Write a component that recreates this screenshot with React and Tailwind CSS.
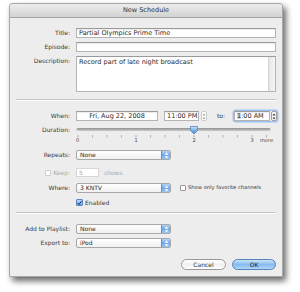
import React from "react";

const font = { fontFamily: '"DejaVu Sans", "Liberation Sans", sans-serif' };

function Label({ children, className = "" }) {
  return (
    <div className={"w-[60px] shrink-0 text-right text-[6px] text-[#3a3a3a] leading-none " + className}>
      {children}
    </div>
  );
}

function Field({ children, className = "" }) {
  return (
    <div
      className={
        "h-[10px] bg-white border border-[#b4b4b4] border-t-[#9a9a9a] shadow-[inset_0_1px_1px_rgba(0,0,0,0.08)] flex items-center px-[2px] text-[6.5px] text-[#2a2a2a] leading-none whitespace-nowrap overflow-hidden " +
        className
      }
    >
      {children}
    </div>
  );
}

function Popup({ value }) {
  return (
    <div className="ml-[6px] w-[95px] h-[10px] rounded-[2px] border border-[#a8a8a8] bg-gradient-to-b from-white to-[#f0f0f0] flex items-stretch overflow-hidden">
      <div className="flex-1 flex items-center pl-[3px] text-[6px] text-[#2a2a2a] leading-none">{value}</div>
      <div className="w-[9px] bg-gradient-to-b from-[#b3d5f7] via-[#6aa7e8] to-[#95c5f2] border-l border-[#6690c8] flex items-center justify-center">
        <svg width="5" height="7" viewBox="0 0 5 7">
          <path d="M2.5 0.5 L4.5 2.7 L0.5 2.7 Z" fill="#fff" />
          <path d="M2.5 6.5 L4.5 4.3 L0.5 4.3 Z" fill="#fff" />
        </svg>
      </div>
    </div>
  );
}

function Stepper({ blue = false }) {
  return (
    <div
      className={
        "w-[6px] h-[10px] rounded-[2px] border flex flex-col items-center justify-center " +
        (blue ? "border-[#a0a0a0] bg-white" : "border-[#cacaca] bg-white")
      }
    >
      <svg width="4" height="7" viewBox="0 0 4 7">
        <path d="M2 0.5 L3.6 2.6 L0.4 2.6 Z" fill={blue ? "#333" : "#a0a0a0"} />
        <path d="M2 6.5 L3.6 4.4 L0.4 4.4 Z" fill={blue ? "#333" : "#a0a0a0"} />
      </svg>
    </div>
  );
}

function Slider() {
  const ticks = [];
  for (let k = 0; k <= 13; k++) ticks.push(2 + k * 14.5);
  return (
    <div className="relative ml-[6px] w-[196px] h-[20px]">
      <svg width="196" height="20" className="absolute left-0 top-0">
        <defs>
          <linearGradient id="trk" x1="0" y1="0" x2="0" y2="1">
            <stop offset="0" stopColor="#8f8f8f" />
            <stop offset="1" stopColor="#cdcdcd" />
          </linearGradient>
          <linearGradient id="thm" x1="0" y1="0" x2="0" y2="1">
            <stop offset="0" stopColor="#d3e8fc" />
            <stop offset="0.5" stopColor="#76afec" />
            <stop offset="1" stopColor="#4a8ddb" />
          </linearGradient>
        </defs>
        <rect x="0.5" y="2" width="194" height="3" rx="1.5" fill="url(#trk)" />
        {ticks.map((t, i) => (
          <line key={i} x1={t} x2={t} y1="9" y2="11.5" stroke="#999" strokeWidth="0.7" />
        ))}
        <path d="M114.5 0.5 H121.5 V4.5 L118 8 L114.5 4.5 Z" fill="url(#thm)" stroke="#4a78b2" strokeWidth="0.7" />
      </svg>
      <span className="absolute top-[12px] left-[0px] text-[5px] text-[#444] leading-none">0</span>
      <span className="absolute top-[12px] left-[58.5px] text-[5px] text-[#444] leading-none">1</span>
      <span className="absolute top-[12px] left-[116.5px] text-[5px] text-[#444] leading-none">2</span>
      <span className="absolute top-[12px] left-[174.5px] text-[5px] text-[#444] leading-none">3</span>
      <span className="absolute top-[12px] left-[184px] text-[5px] text-[#444] leading-none">more</span>
    </div>
  );
}

function Checkbox({ checked, disabled }) {
  if (checked) {
    return (
      <div className="w-[7px] h-[7px] rounded-[1px] border border-[#5b88c4] bg-gradient-to-b from-[#bcdaf8] to-[#66a4e6] flex items-center justify-center">
        <svg width="6" height="6" viewBox="0 0 6 6">
          <path d="M0.8 3 L2.4 4.8 L5.5 0.5" fill="none" stroke="#1a2a4a" strokeWidth="1.1" />
        </svg>
      </div>
    );
  }
  return (
    <div
      className={
        "w-[6px] h-[6px] rounded-[1px] border bg-white " +
        (disabled ? "border-[#cdcdcd]" : "border-[#999]")
      }
    />
  );
}

function Button({ children, primary }) {
  return (
    <div
      className={
        "h-[11px] rounded-full border flex items-center justify-center text-[6px] leading-none " +
        (primary
          ? "w-[44px] border-[#5582bb] bg-gradient-to-b from-[#cbe3fa] via-[#86bbf0] to-[#b0d6f8] text-[#222]"
          : "w-[45px] border-[#999] bg-gradient-to-b from-white via-[#f1f1f1] to-[#fdfdfd] text-[#333]")
      }
    >
      {children}
    </div>
  );
}

export default function App() {
  return (
    <div className="w-[300px] h-[292px] bg-white overflow-hidden" style={font}>
      <div className="ml-[9px] pt-[3px]">
        <div className="w-[274px] h-[274px] bg-[#ededed] border border-[#a8a8a8] rounded-t-[3px] shadow-[3px_4px_6px_rgba(0,0,0,0.6)] flex flex-col">
          <div className="h-[14px] shrink-0 rounded-t-[3px] bg-gradient-to-b from-[#ededed] to-[#d2d2d2] border-b border-[#a4a4a4] flex items-center justify-center text-[6.5px] text-[#333] leading-none">
            New Schedule
          </div>

          <div className="flex flex-col">
            <div className="flex items-center mt-[10px]">
              <Label>Title:</Label>
              <Field className="ml-[6px] w-[200px]">Partial Olympics Prime Time</Field>
            </div>
            <div className="flex items-center mt-[4px]">
              <Label>Episode:</Label>
              <Field className="ml-[6px] w-[200px]"></Field>
            </div>
            <div className="flex items-start mt-[4px]">
              <Label className="pt-[2px]">Description:</Label>
              <div className="ml-[6px] w-[200px] h-[36px] bg-white border border-[#b4b4b4] border-t-[#9a9a9a] flex">
                <div className="flex-1 px-[2px] pt-[2px] text-[6.5px] text-[#2a2a2a] leading-none whitespace-nowrap">
                  Record part of late night broadcast
                </div>
                <div className="w-[7px] border-l border-[#d4d4d4] bg-gradient-to-r from-[#e6e6e6] to-[#f6f6f6]" />
              </div>
            </div>

            <div className="mt-[7px] mx-[6px] h-[2px] bg-[#c4c4c4] border-b border-white" />

            <div className="flex items-center mt-[10px]">
              <Label>When:</Label>
              <Field className="ml-[6px] w-[82px] justify-center">Fri, Aug 22, 2008</Field>
              <Field className="ml-[6px] w-[35px]">11:00 PM</Field>
              <div className="ml-[2px]"><Stepper /></div>
              <div className="ml-[10px] w-[17px] text-[6px] text-[#3a3a3a] leading-none">to:</div>
              <div className="flex items-center rounded-[2px] shadow-[0_0_0_1.5px_#9cc2ef]">
                <Field className="w-[36px]">
                  <span className="bg-[#b5d5ff]">1</span>:00 AM
                </Field>
                <div className="ml-[1px]"><Stepper blue /></div>
              </div>
            </div>

            <div className="flex items-start mt-[5px]">
              <Label className="pt-[1px]">Duration:</Label>
              <Slider />
            </div>

            <div className="flex items-center mt-[4px]">
              <Label>Repeats:</Label>
              <Popup value="None" />
            </div>

            <div className="flex items-center mt-[8px]">
              <div className="w-[60px] shrink-0 flex items-center justify-end gap-[2px]">
                <Checkbox disabled />
                <span className="text-[6px] text-[#ababab] leading-none">Keep:</span>
              </div>
              <div className="ml-[6px] w-[23px] h-[9px] bg-white border border-[#d6d6d6] flex items-center px-[2px] text-[6px] text-[#aaa] leading-none">5</div>
              <span className="ml-[5px] text-[6px] text-[#aaa] leading-none">shows</span>
            </div>

            <div className="flex items-center mt-[6px]">
              <Label>Where:</Label>
              <Popup value="3 KNTV" />
              <div className="ml-[9px] flex items-center gap-[2px]">
                <Checkbox />
                <span className="text-[5.2px] text-[#3a3a3a] leading-none whitespace-nowrap">Show only favorite channels</span>
              </div>
            </div>

            <div className="flex items-center mt-[6px] ml-[66px] gap-[2px]">
              <Checkbox checked />
              <span className="text-[6px] text-[#3a3a3a] leading-none">Enabled</span>
            </div>

            <div className="mt-[6px] mx-[6px] h-[2px] bg-[#c4c4c4] border-b border-white" />

            <div className="flex items-center mt-[10px]">
              <Label>Add to Playlist:</Label>
              <Popup value="None" />
            </div>
            <div className="flex items-center mt-[4px]">
              <Label>Export to:</Label>
              <Popup value="iPod" />
            </div>

            <div className="flex justify-end gap-[6px] mt-[11px] mr-[6px]">
              <Button>Cancel</Button>
              <Button primary>OK</Button>
            </div>
          </div>
        </div>
      </div>
    </div>
  );
}
